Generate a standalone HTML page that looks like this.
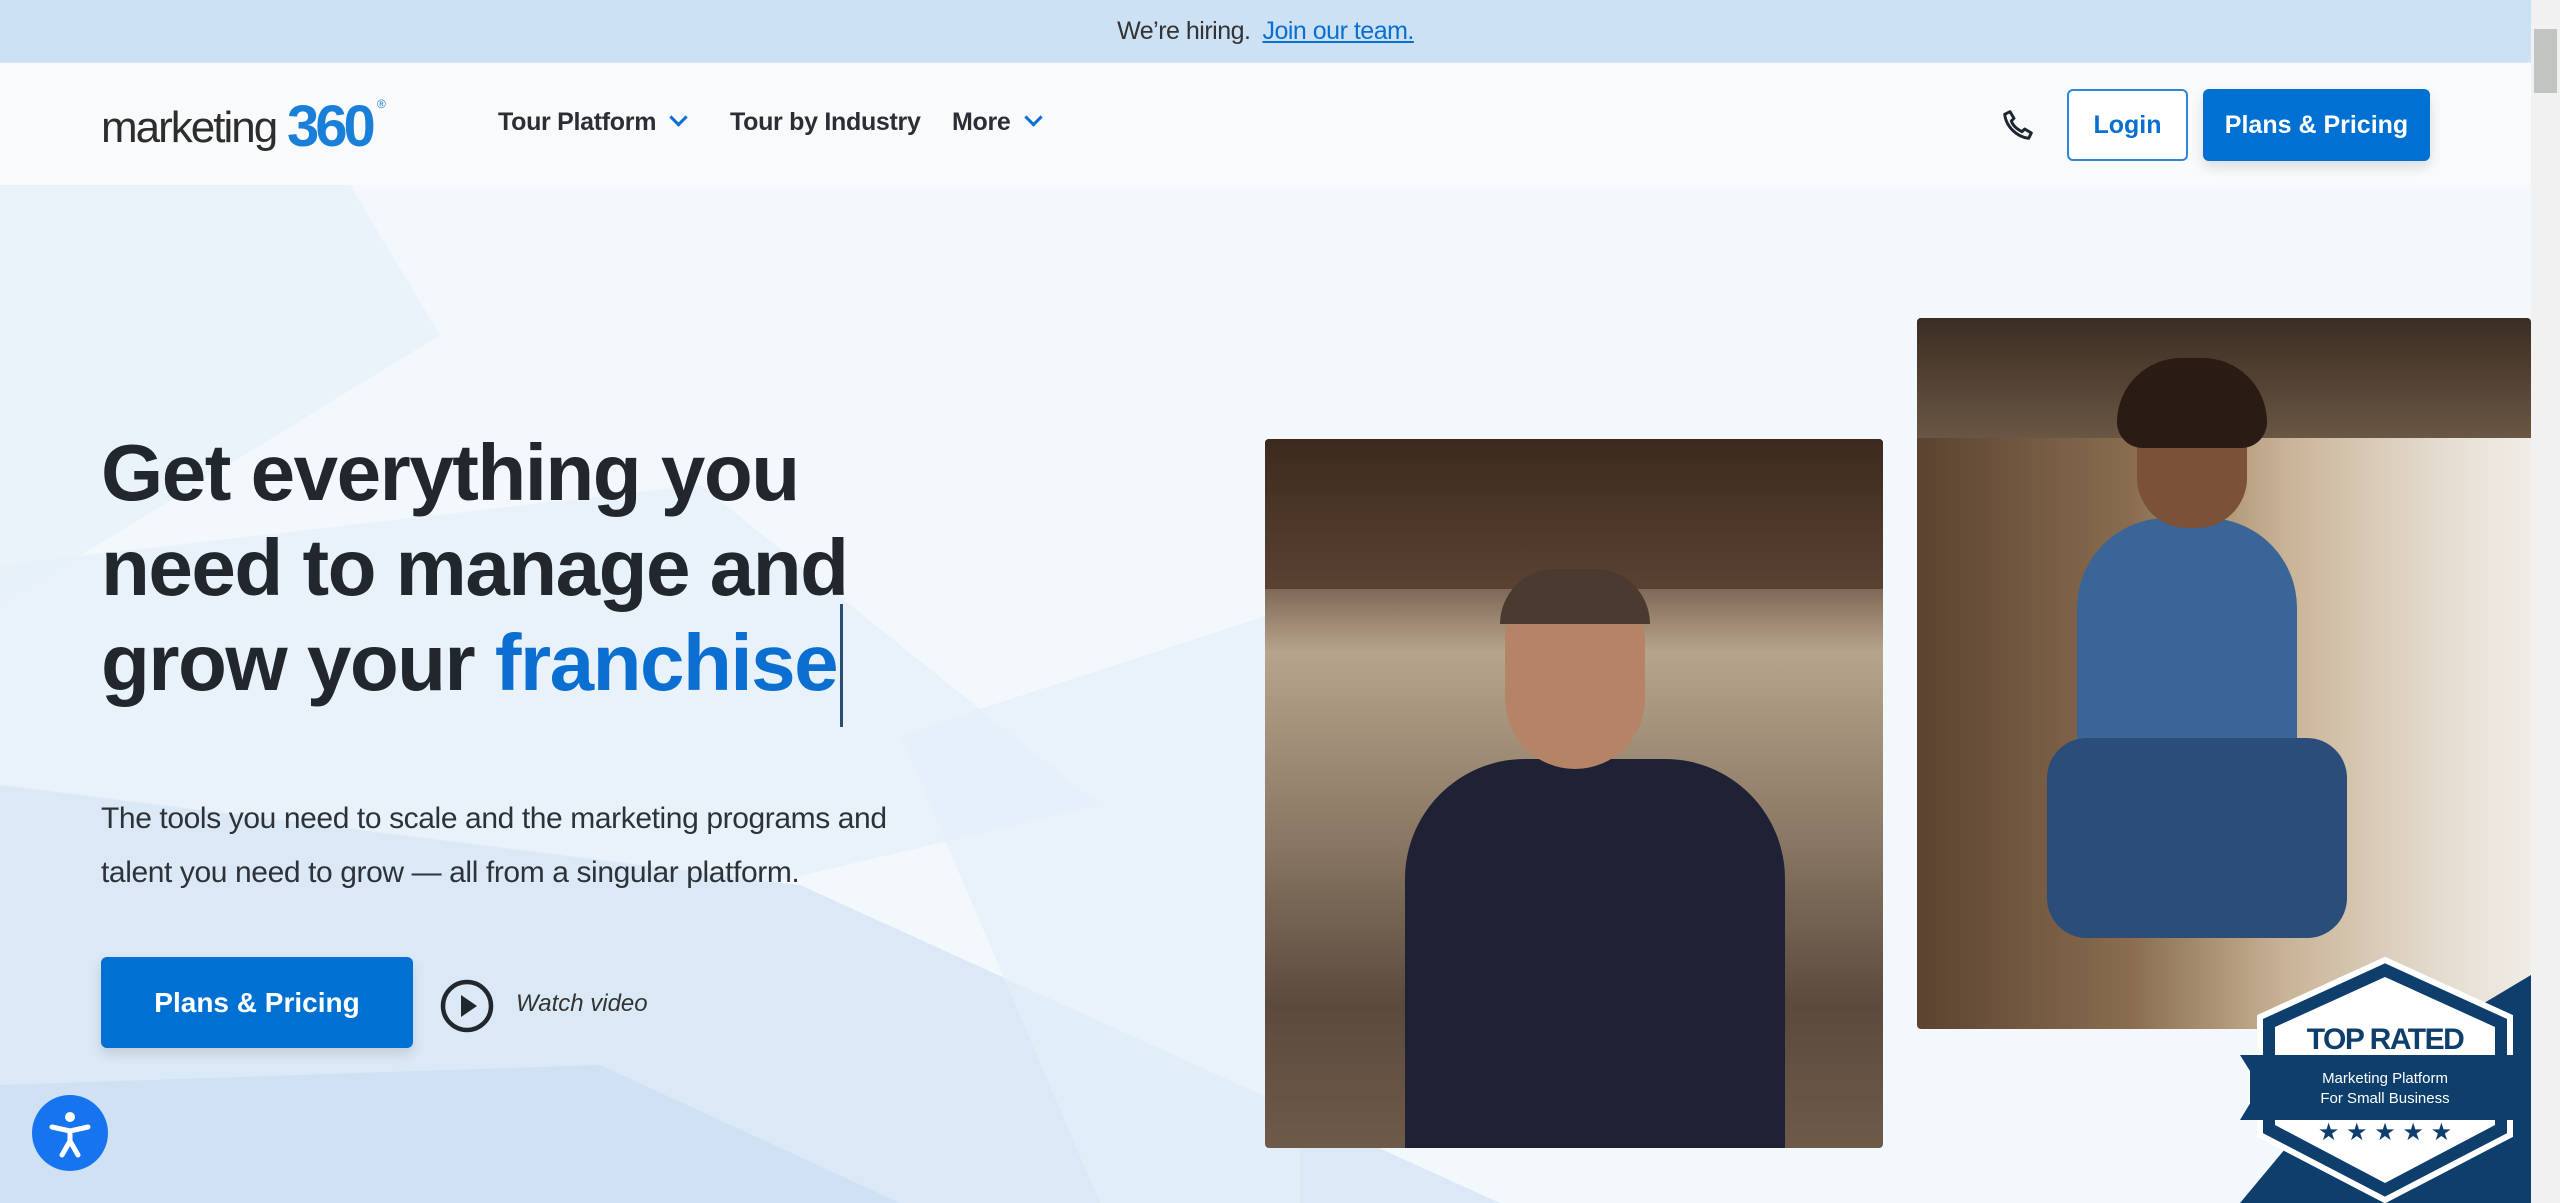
<!DOCTYPE html>
<html><head><meta charset="utf-8"><style>
*{margin:0;padding:0;box-sizing:border-box}
body{width:2560px;height:1203px;overflow:hidden;font-family:"Liberation Sans",sans-serif;background:#f3f8fc;position:relative;color:#22272e}
.top{position:absolute;left:0;top:0;width:2531px;height:62px;background:#cde1f5;text-align:center;font-size:25px;line-height:62px;color:#333;letter-spacing:-0.5px}
.top a{color:#0a6fd0;text-decoration:underline;margin-left:12px}
.nav{position:absolute;left:0;top:62px;width:2531px;height:123px;background:#f8fafb;border-top:1px solid #dde8f2}
.scroll{position:absolute;right:0;top:0;width:29px;height:1203px;background:#f1f1f1}
.scroll .th{position:absolute;left:3px;top:29px;width:23px;height:64px;background:#c1c4c1}
.bg{position:absolute;left:0;top:185px;width:2531px;height:1018px;overflow:hidden}
.nl{position:absolute;font-size:25px;font-weight:bold;color:#2b2f35;letter-spacing:-0.3px}
.chev{display:inline-block;width:13px;height:13px;border-right:3.5px solid #0a6fd0;border-bottom:3.5px solid #0a6fd0;transform:rotate(45deg);margin-left:16px;position:relative;top:-6px}
h1{position:absolute;left:101px;top:425px;font-size:80px;line-height:95px;font-weight:bold;color:#22272e;letter-spacing:-1.5px}
h1 span{color:#0a6fd0}
.cur{position:absolute;left:840px;top:604px;width:3px;height:123px;background:#2a4d78}
p.sub{position:absolute;left:101px;top:792px;font-size:30px;line-height:54px;color:#2d3238;letter-spacing:-0.4px}
.btn{position:absolute;background:#0070d2;color:#fff;font-weight:bold;text-align:center;border-radius:6px;box-shadow:0 6px 12px rgba(0,0,0,.12)}
.photo{position:absolute;border-radius:4px;overflow:hidden}
</style></head><body>
<div class="bg">
<svg width="2531" height="1018" viewBox="0 0 2531 1018">
<polygon points="0,0 350,0 440,150 0,420" fill="#eaf2fa"/>
<polygon points="0,380 700,300 1100,620 0,880" fill="#e6f0f9" opacity=".8"/>
<polygon points="0,600 800,700 1500,1018 0,1018" fill="#dbe9f6"/>
<polygon points="0,900 600,880 900,1018 0,1018" fill="#cfe1f3"/>
<polygon points="900,550 1300,420 1300,1018 1100,1018" fill="#e4eff9" opacity=".7"/>
</svg>
</div>
<div class="top">We’re hiring.<a>Join our team.</a></div>
<div class="nav">
 <div style="position:absolute;left:101px;top:34px;width:290px;height:60px;white-space:nowrap">
  <span style="position:absolute;left:0;top:6px;font-size:44px;color:#2d2d2d;letter-spacing:-2px">marketing</span><span style="position:absolute;left:186px;top:-4px;font-size:58px;color:#1a7fd8;letter-spacing:-4px;font-weight:bold">360</span><span style="position:absolute;left:276px;top:0;font-size:12px;color:#1a7fd8">®</span>
 </div>
 <div class="nl" style="left:498px;top:45px">Tour Platform<span class="chev"></span></div>
 <div class="nl" style="left:730px;top:45px">Tour by Industry</div>
 <div class="nl" style="left:952px;top:45px">More<span class="chev"></span></div>
 <svg style="position:absolute;left:2002px;top:46px" width="32" height="32" viewBox="0 0 24 24"><path d="M6 2 L9 7 L7 9 C8 12 11 15 15 17 L17 15 L22 18 L20 22 C11 21 3 13 2 4 Z" fill="none" stroke="#1d2530" stroke-width="2.2" stroke-linejoin="round"/></svg>
 <div style="position:absolute;left:2067px;top:26px;width:121px;height:72px;border:2px solid #2f86d8;border-radius:6px;background:#fff;color:#0a6fd0;font-weight:bold;font-size:25px;text-align:center;line-height:68px">Login</div>
 <div class="btn" style="left:2203px;top:26px;width:227px;height:72px;font-size:25px;line-height:72px">Plans &amp; Pricing</div>
</div>
<h1>Get everything you<br>need to manage and<br>grow your <span>franchise</span></h1>
<div class="cur"></div>
<p class="sub">The tools you need to scale and the marketing programs and<br>talent you need to grow — all from a singular platform.</p>
<div class="btn" style="left:101px;top:957px;width:312px;height:91px;font-size:28px;line-height:91px">Plans &amp; Pricing</div>
<svg style="position:absolute;left:440px;top:979px" width="54" height="54" viewBox="0 0 54 54"><circle cx="27" cy="27" r="24" fill="none" stroke="#22272e" stroke-width="4.5"/><polygon points="21,16 37,27 21,38" fill="#22272e"/></svg>
<div style="position:absolute;left:516px;top:990px;font-size:24px;font-style:italic;color:#333">Watch video</div>
<div class="photo" style="left:1265px;top:439px;width:618px;height:709px;background:linear-gradient(180deg,#4a3527 0%,#6b5444 18%,#b7a48c 30%,#8d7a66 55%,#5b4a3d 80%,#6f5a49 100%)">
 <div style="position:absolute;left:0;top:0;width:100%;height:150px;background:linear-gradient(#3c2a1e,#5a4232)"></div>
 <div style="position:absolute;left:140px;top:320px;width:380px;height:400px;background:#1f2235;border-radius:120px 120px 0 0"></div>
 <div style="position:absolute;left:240px;top:140px;width:140px;height:190px;background:#b58466;border-radius:60px 60px 70px 70px"></div>
 <div style="position:absolute;left:235px;top:130px;width:150px;height:55px;background:#4a3a30;border-radius:70px 70px 0 0"></div>
</div>
<div class="photo" style="left:1917px;top:318px;width:614px;height:711px;background:linear-gradient(90deg,#5b4330 0%,#8a6d50 35%,#c9b396 60%,#e4dccf 85%,#f0ece6 100%)">
 <div style="position:absolute;left:0;top:0;width:100%;height:120px;background:linear-gradient(#3a2d22,#6a5644)"></div>
 <div style="position:absolute;left:160px;top:200px;width:220px;height:260px;background:#3b6596;border-radius:90px 90px 20px 20px"></div>
 <div style="position:absolute;left:130px;top:420px;width:300px;height:200px;background:#2b4d79;border-radius:40px"></div>
 <div style="position:absolute;left:220px;top:70px;width:110px;height:140px;background:#7b5138;border-radius:50px"></div>
 <div style="position:absolute;left:200px;top:40px;width:150px;height:90px;background:#2a1c14;border-radius:75px 75px 30px 30px"></div>
</div>
<svg style="position:absolute;left:2240px;top:955px" width="291" height="248" viewBox="0 0 291 248">
<polygon points="291,20 291,248 0,248 90,140" fill="#0e3f6c"/>
<polygon points="145,5 270,62 270,180 145,245 20,180 20,62" fill="#0e3f6c" stroke="#fff" stroke-width="6"/>
<polygon points="145,22 255,72 255,170 145,228 35,170 35,72" fill="#fff"/>
<rect x="10" y="100" width="270" height="65" fill="#0e3f6c"/>
<polygon points="0,100 35,100 35,165 0,165 20,132" fill="#0e3f6c"/>
<text x="145" y="94" text-anchor="middle" font-family="Liberation Sans" font-weight="bold" font-size="30" fill="#0e3f6c" letter-spacing="-1.5">TOP RATED</text>
<text x="145" y="128" text-anchor="middle" font-family="Liberation Sans" font-size="15" fill="#fff">Marketing Platform</text>
<text x="145" y="148" text-anchor="middle" font-family="Liberation Sans" font-size="15" fill="#fff">For Small Business</text>
<text x="145" y="185" text-anchor="middle" font-size="24" fill="#0e3f6c">★ ★ ★ ★ ★</text>
</svg>
<div style="position:absolute;left:32px;top:1095px;width:76px;height:76px;border-radius:50%;background:#1774ef">
<svg width="76" height="76" viewBox="0 0 76 76"><circle cx="38" cy="22" r="5" fill="#fff"/><path d="M20 32 L38 36 L56 32 M38 36 L38 46 L30 60 M38 46 L46 60" fill="none" stroke="#fff" stroke-width="5" stroke-linecap="round" stroke-linejoin="round"/></svg></div>
<div class="scroll"><div class="th"></div></div>
</body></html>
